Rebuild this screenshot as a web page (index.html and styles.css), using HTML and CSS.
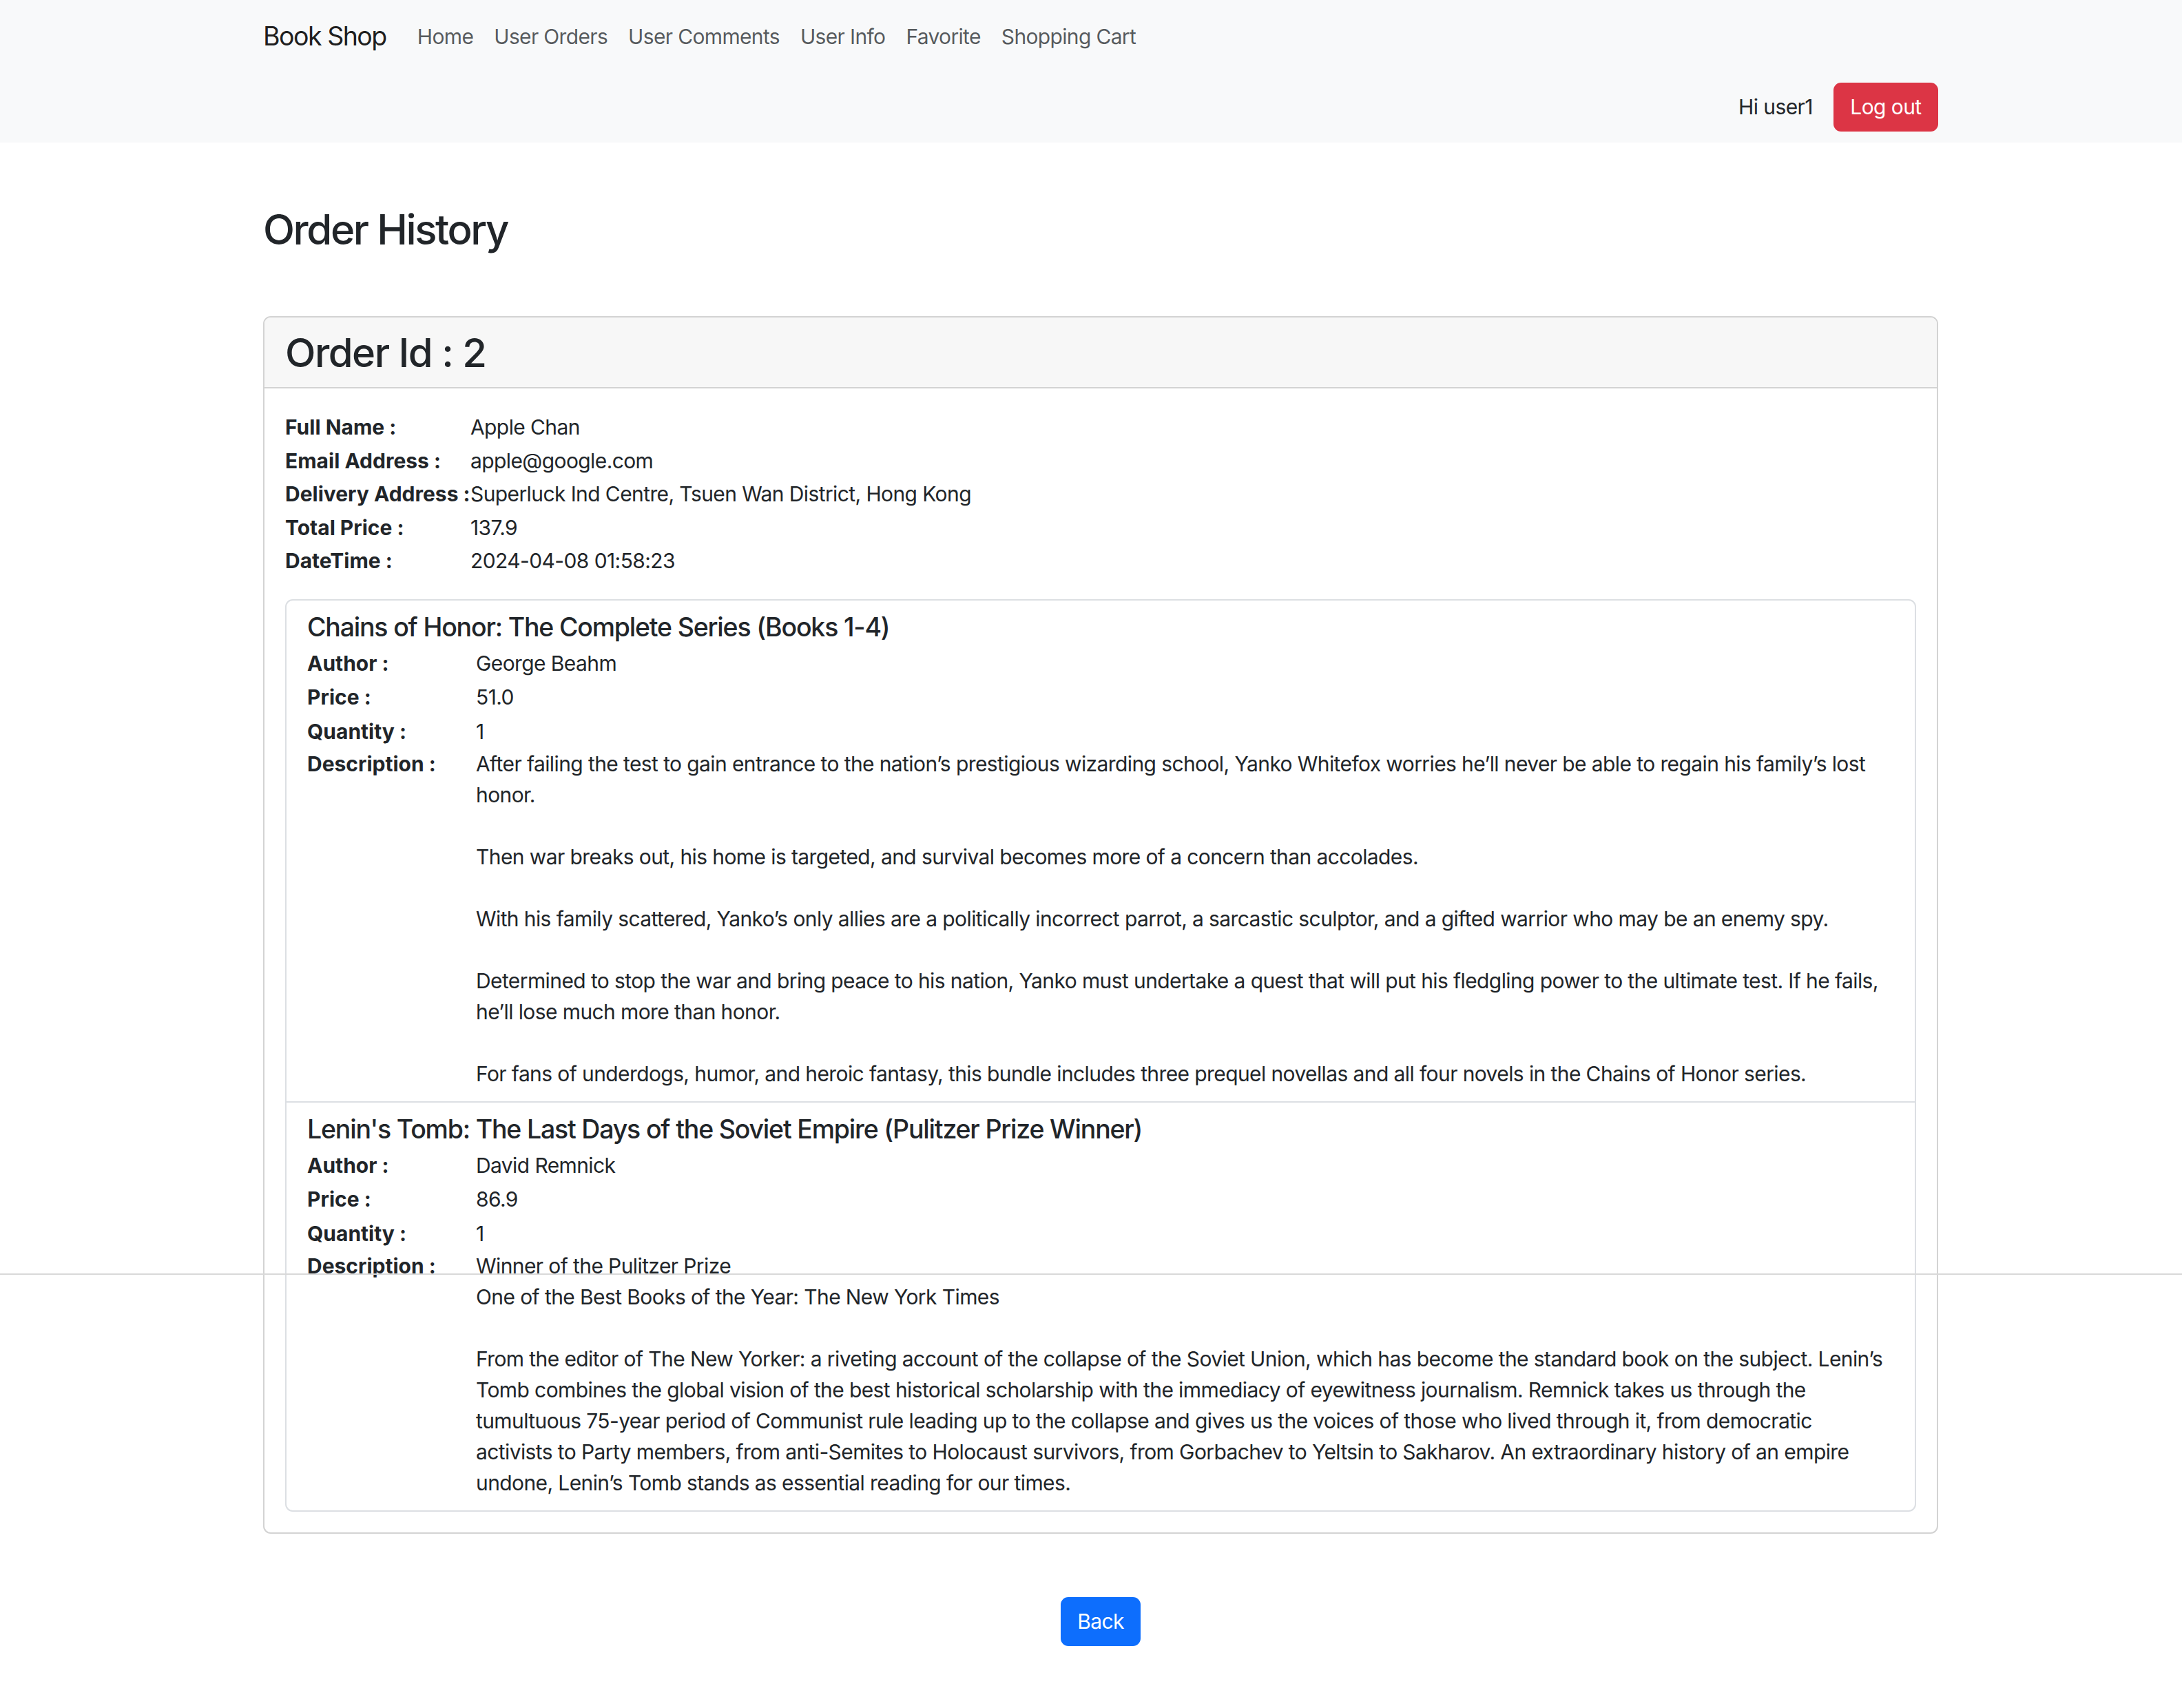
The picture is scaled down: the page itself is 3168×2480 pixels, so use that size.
FILE: index.html
```html
<!DOCTYPE html>
<html lang="en">
<head>
<meta charset="utf-8">
<title>Book Shop - Order History</title>
<link rel="stylesheet" href="styles.css">
</head>
<body>
<nav class="navbar">
  <div class="nav-wrap">
    <div class="nav-row">
      <a class="brand" href="#">Book Shop</a>
      <ul class="nav-links">
        <li><a href="#">Home</a></li>
        <li><a href="#">User Orders</a></li>
        <li><a href="#">User Comments</a></li>
        <li><a href="#">User Info</a></li>
        <li><a href="#">Favorite</a></li>
        <li><a href="#">Shopping Cart</a></li>
      </ul>
    </div>
    <div class="nav-user">
      <span class="greet">Hi user1</span>
      <button class="btn btn-danger" type="button">Log out</button>
    </div>
  </div>
</nav>

<main class="container">
  <h2 class="page-title">Order History</h2>

  <section class="card">
    <div class="card-header">
      <h3 class="order-id">Order Id : 2</h3>
    </div>
    <div class="card-body">
      <dl class="info">
        <dt>Full Name :</dt><dd>Apple Chan</dd>
        <dt>Email Address :</dt><dd>apple@google.com</dd>
        <dt>Delivery Address :</dt><dd>Superluck Ind Centre, Tsuen Wan District, Hong Kong</dd>
        <dt>Total Price :</dt><dd>137.9</dd>
        <dt>DateTime :</dt><dd>2024-04-08 01:58:23</dd>
      </dl>

      <ul class="items">
        <li class="item">
          <h5 class="book-title">Chains of Honor: The Complete Series (Books 1-4)</h5>
          <dl class="book">
            <dt>Author :</dt><dd>George Beahm</dd>
            <dt>Price :</dt><dd>51.0</dd>
            <dt>Quantity :</dt><dd>1</dd>
            <dt class="desc-label">Description :</dt>
            <dd class="desc">After failing the test to gain entrance to the nation’s prestigious wizarding school, Yanko Whitefox worries he’ll never be able to regain his family’s lost
honor.

Then war breaks out, his home is targeted, and survival becomes more of a concern than accolades.

With his family scattered, Yanko’s only allies are a politically incorrect parrot, a sarcastic sculptor, and a gifted warrior who may be an enemy spy.

Determined to stop the war and bring peace to his nation, Yanko must undertake a quest that will put his fledgling power to the ultimate test. If he fails,
he’ll lose much more than honor.

For fans of underdogs, humor, and heroic fantasy, this bundle includes three prequel novellas and all four novels in the Chains of Honor series.</dd>
          </dl>
        </li>
        <li class="item">
          <h5 class="book-title">Lenin's Tomb: The Last Days of the Soviet Empire (Pulitzer Prize Winner)</h5>
          <dl class="book">
            <dt>Author :</dt><dd>David Remnick</dd>
            <dt>Price :</dt><dd>86.9</dd>
            <dt>Quantity :</dt><dd>1</dd>
            <dt class="desc-label">Description :</dt>
            <dd class="desc">Winner of the Pulitzer Prize
One of the Best Books of the Year: The New York Times

From the editor of The New Yorker: a riveting account of the collapse of the Soviet Union, which has become the standard book on the subject. Lenin’s
Tomb combines the global vision of the best historical scholarship with the immediacy of eyewitness journalism. Remnick takes us through the
tumultuous 75-year period of Communist rule leading up to the collapse and gives us the voices of those who lived through it, from democratic
activists to Party members, from anti-Semites to Holocaust survivors, from Gorbachev to Yeltsin to Sakharov. An extraordinary history of an empire
undone, Lenin’s Tomb stands as essential reading for our times.</dd>
          </dl>
        </li>
      </ul>
    </div>
  </section>

  <div class="actions">
    <button class="btn btn-primary" type="button">Back</button>
  </div>
</main>

<div class="seam"></div>
</body>
</html>
```

FILE: styles.css
```css
* { box-sizing: border-box; }

body {
  margin: 0;
  font-family: Inter, "Noto Sans", "Liberation Sans", sans-serif;
  font-size: 30px;
  line-height: 1.5;
  letter-spacing: -0.02em;
  color: #212529;
  background: #fff;
  position: relative;
  min-height: 2480px;
}

/* ---------- navbar ---------- */
.navbar {
  background: #f8f9fa;
  padding: 15px 0 16px;
}
.nav-wrap {
  width: 2432px;
  margin-left: 382px;
}
.nav-row {
  display: flex;
  align-items: center;
  height: 76px;
}
.brand {
  font-size: 37.5px;
  letter-spacing: -0.04em;
  color: rgba(0, 0, 0, 0.9);
  text-decoration: none;
  margin-right: 30px;
}
.nav-links {
  display: flex;
  list-style: none;
  margin: 0;
  padding: 0;
}
.nav-links a {
  display: block;
  padding: 0 15px;
  letter-spacing: -0.022em;
  color: rgba(33, 37, 41, 0.75);
  text-decoration: none;
}
.nav-user {
  display: flex;
  justify-content: flex-end;
  align-items: center;
  gap: 30px;
  margin-top: 29px;
}
.greet { color: #212529; }

/* ---------- buttons ---------- */
.btn {
  font: inherit;
  font-size: 30px;
  line-height: 45px;
  letter-spacing: -0.02em;
  padding: 11px 22.5px;
  border: 2px solid transparent;
  border-radius: 11px;
  color: #fff;
  cursor: pointer;
}
.btn-danger { background: #dc3545; border-color: #dc3545; }
.btn-primary { background: #0d6efd; border-color: #0d6efd; }

/* ---------- main ---------- */
.container {
  width: 2432px;
  margin-left: 382px;
}
.page-title {
  font-size: 60px;
  font-weight: 500;
  line-height: 1.2;
  letter-spacing: -0.04em;
  margin: 90px 0 0;
}

.card {
  margin-top: 90px;
  border: 2px solid #d3d3d3;
  border-radius: 11px;
  overflow: hidden;
}
.card-header {
  background: #f7f7f7;
  padding: 16px 30px 15px;
  border-bottom: 2px solid #d3d3d3;
}
.order-id {
  margin: 0;
  font-size: 58px;
  font-weight: 500;
  line-height: 70px;
  letter-spacing: -0.026em;
}
.card-body {
  padding: 32px 30px 30px;
}

.info {
  display: grid;
  grid-template-columns: 269px 1fr;
  line-height: 48.5px;
  margin: 0 0 31.5px;
}
dt { font-weight: 700; letter-spacing: 0; }
dd { margin: 0; }

.items {
  list-style: none;
  margin: 0;
  padding: 0;
  border: 2px solid #dcdfe3;
  border-radius: 11px;
}
.item {
  padding: 15px 30px 17px;
}
.item + .item {
  border-top: 2px solid #dcdfe3;
}
.book-title {
  margin: 0 0 3px;
  font-size: 37.5px;
  font-weight: 500;
  line-height: 48.5px;
  letter-spacing: -0.032em;
}
.book {
  display: grid;
  grid-template-columns: 245px 1fr;
  line-height: 49.5px;
  margin: 0;
}
.book .desc-label,
.book .desc {
  line-height: 45px;
}
.desc {
  white-space: pre;
}

.actions {
  display: flex;
  justify-content: center;
  margin-top: 92px;
}

/* screenshot seam line across the page */
.seam {
  position: absolute;
  left: 0;
  right: 0;
  top: 1849px;
  height: 2px;
  background: #d9d9d9;
}
```
